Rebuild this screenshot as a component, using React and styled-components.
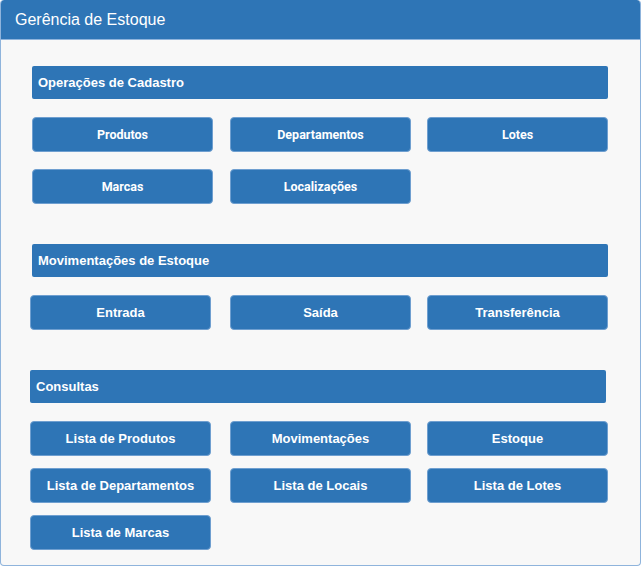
import React from 'react';
import styled, { createGlobalStyle } from 'styled-components';

const GlobalStyle = createGlobalStyle`
  html, body {
    margin: 0;
    padding: 0;
    background: #ffffff;
  }
  body {
    font-family: "Liberation Sans", Arial, sans-serif;
  }
`;

const Window = styled.div`
  box-sizing: border-box;
  width: 641px;
  height: 566px;
  border: 1px solid #8fb4dc;
  border-top: none;
  border-radius: 4px;
  background: #f8f8f8;
  overflow: hidden;
  display: flex;
  flex-direction: column;
`;

const TitleBar = styled.div`
  height: 39px;
  margin: 0 -1px;
  background: #2e75b6;
  border-bottom: 1px solid #8fb4dc;
  display: flex;
  align-items: center;
  padding-left: 15px;
  color: #ffffff;
  font-size: 16px;
  border-radius: 4px 4px 0 0;
`;

const Body = styled.div`
  display: flex;
  flex-direction: column;
  padding: 26px 0 0 31px;
`;

const Section = styled.section`
  display: flex;
  flex-direction: column;
  margin-bottom: ${p => p.$after || 0}px;
`;

const SectionHeader = styled.div`
  box-sizing: border-box;
  width: 576px;
  height: 33px;
  margin-left: ${p => p.$shift || 0}px;
  background: #2e75b6;
  border-radius: 2px;
  color: #ffffff;
  font-weight: bold;
  font-size: 13px;
  display: flex;
  align-items: center;
  padding-left: 6px;
`;

const ButtonGrid = styled.div`
  display: grid;
  grid-template-columns: 1fr 181px 181px;
  column-gap: 16px;
  row-gap: ${p => p.$rowGap}px;
  width: ${p => 576 - (p.$shift || 0)}px;
  margin-left: ${p => p.$shift || 0}px;
  margin-top: 18px;
`;

const ActionButton = styled.button`
  box-sizing: border-box;
  width: 181px;
  height: 35px;
  background: #2e75b6;
  border: 1px solid #6f9fd0;
  border-radius: 4px;
  color: #ffffff;
  font-family: ${p => (p.$roboto ? 'Roboto, "Liberation Sans", sans-serif' : '"Liberation Sans", Arial, sans-serif')};
  font-weight: bold;
  font-size: ${p => (p.$roboto ? 12.5 : 13)}px;
  padding: 0;
  cursor: pointer;
`;

const sections = [
  {
    title: 'Operações de Cadastro',
    roboto: true,
    rowGap: 17,
    after: 40,
    buttons: ['Produtos', 'Departamentos', 'Lotes', 'Marcas', 'Localizações'],
  },
  {
    title: 'Movimentações de Estoque',
    rowGap: 17,
    after: 40,
    gridShift: -2,
    buttons: ['Entrada', 'Saída', 'Transferência'],
  },
  {
    title: 'Consultas',
    rowGap: 12,
    headerShift: -2,
    gridShift: -2,
    buttons: [
      'Lista de Produtos',
      'Movimentações',
      'Estoque',
      'Lista de Departamentos',
      'Lista de Locais',
      'Lista de Lotes',
      'Lista de Marcas',
    ],
  },
];

const App = () => {
  return (
    <>
      <GlobalStyle />
      <Window>
        <TitleBar>Gerência de Estoque</TitleBar>
        <Body>
          {sections.map(section => (
            <Section key={section.title} $after={section.after}>
              <SectionHeader $shift={section.headerShift}>{section.title}</SectionHeader>
              <ButtonGrid $rowGap={section.rowGap} $shift={section.gridShift}>
                {section.buttons.map(label => (
                  <ActionButton key={label} $roboto={section.roboto}>
                    {label}
                  </ActionButton>
                ))}
              </ButtonGrid>
            </Section>
          ))}
        </Body>
      </Window>
    </>
  );
};

export default App;
